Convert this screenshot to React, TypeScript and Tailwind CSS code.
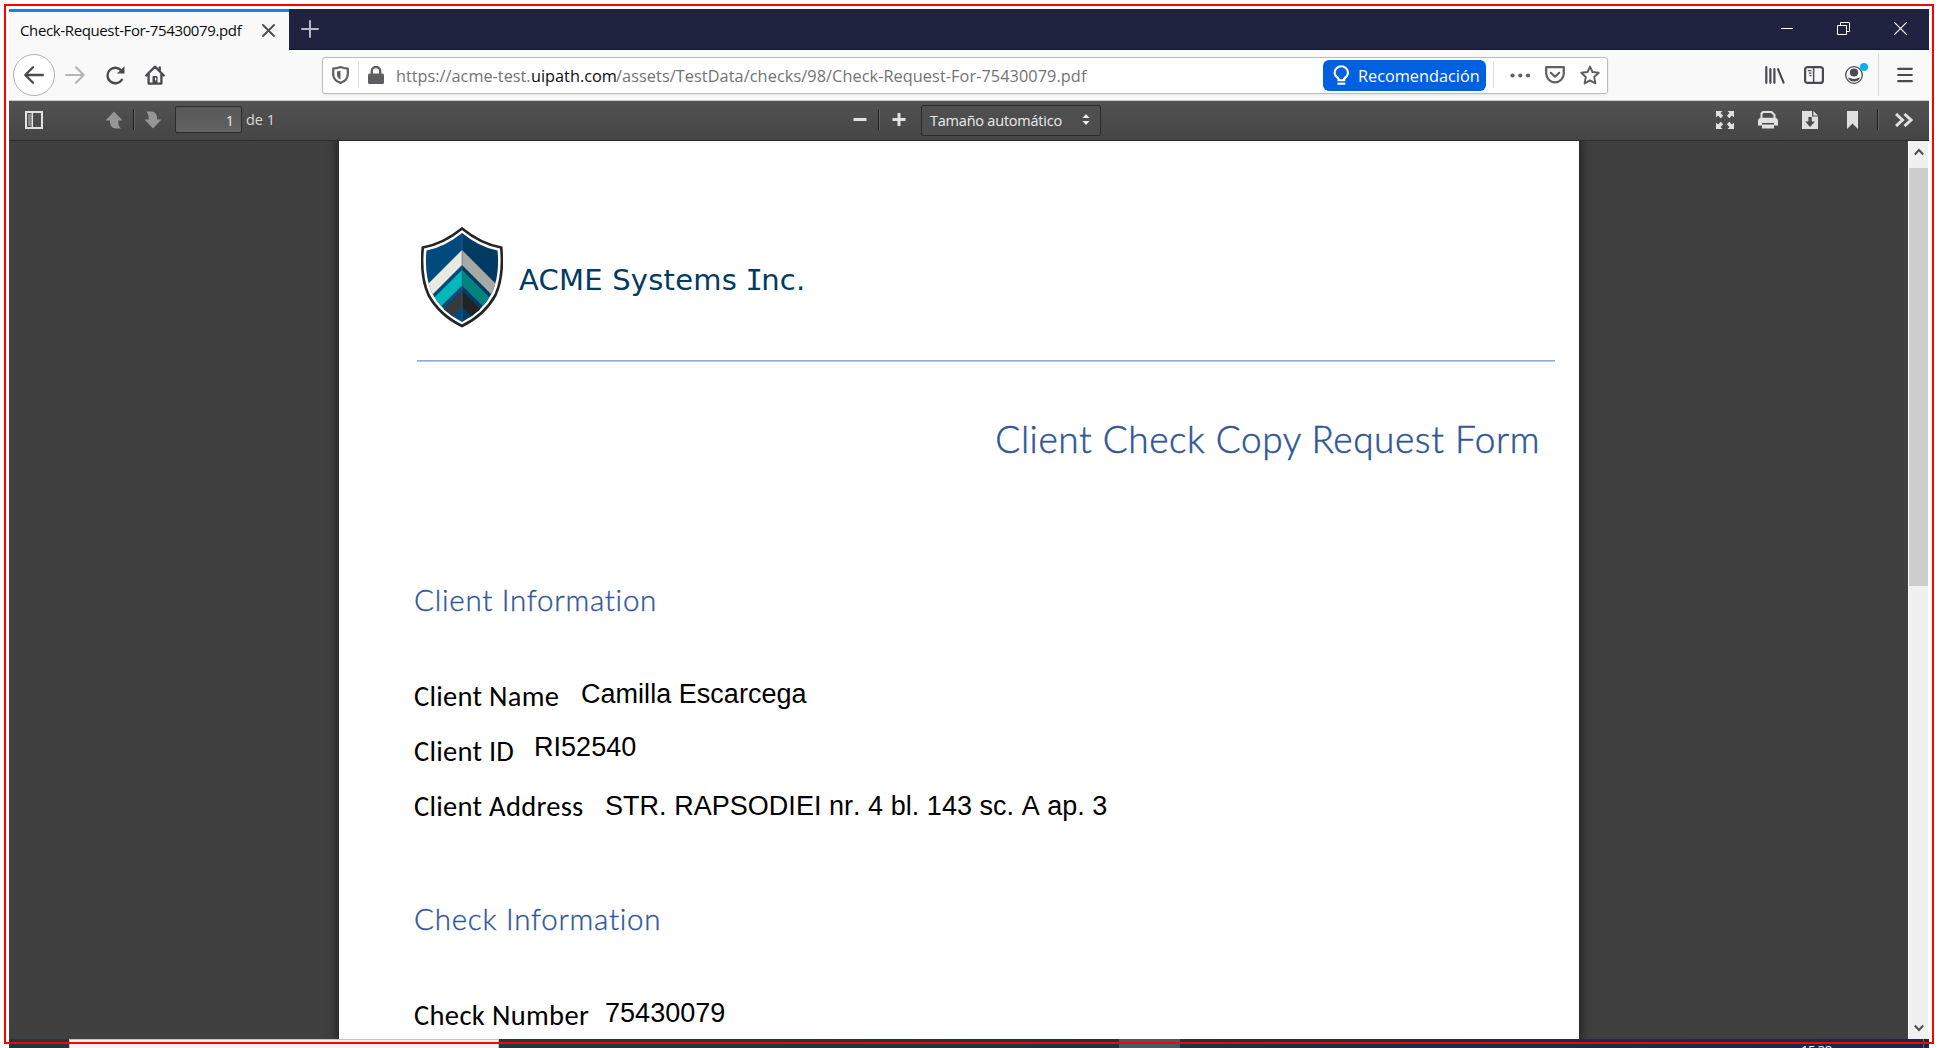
import type { ReactNode } from "react";

const UI = "font-['Open_Sans','Noto_Sans',sans-serif]";

function Shield() {
  return (
    <svg width="82" height="101" viewBox="0 0 82 101" className="shrink-0">
      <defs>
        <clipPath id="shield-inner">
          <path d="M41 6Q58 20 76.500 23.500Q79 48 71 66Q61 85 41 95Q21 85 11 66Q3 48 5.500 23.500Q24 20 41 6Z" />
        </clipPath>
      </defs>
      <path d="M41 1.500Q60 17 80.200 20.500Q83 49 74.500 68Q63.500 88 41 99Q18.500 88 7.500 68Q-1 49 1.800 20.500Q22 17 41 1.500Z" fill="#fff" stroke="#222426" strokeWidth="2.600" />
      <g clipPath="url(#shield-inner)">
        <path d="M0 0H41V101H0Z" fill="#034a7c" />
        <path d="M41 0H82V101H41Z" fill="#013a63" />
        <path d="M41 23L0 64V79L41 38Z" fill="#e9eadf" />
        <path d="M41 23L82 64V79L41 38Z" fill="#a7a9a4" />
        <path d="M41 43L0 84V99L41 58.500Z" fill="#02b8b9" />
        <path d="M41 43L82 84V99L41 58.500Z" fill="#018380" />
        <path d="M41 64L4 101H20L41 79.500Z" fill="#38393b" />
        <path d="M41 64L78 101H62L41 79.500Z" fill="#222325" />
        <path d="M41 0V101" stroke="#3d7099" strokeWidth=".6" />
      </g>
    </svg>
  );
}

function Row({ label, value, gap, col, shift, tracking }: { label: string; value: string; gap: string; col: string; shift: string; tracking: string }) {
  return (
    <div className={`flex h-10 items-start whitespace-nowrap text-black ${gap}`}>
      <span className={`-ml-[1px] mt-[1px] shrink-0 font-['Carlito','Calibri',sans-serif] text-[28.500px] font-normal leading-10 ${col} ${tracking}`}>{label}</span>
      <span className={`font-['Liberation_Sans',Arial,sans-serif] text-[27px] leading-10 tracking-[0.030px] [font-kerning:none] ${shift}`}>{value}</span>
    </div>
  );
}

function Heading({ children, gap }: { children: ReactNode; gap: string }) {
  return <h2 className={`-ml-[1px] font-['Lato',sans-serif] text-[29.500px] font-light leading-10 tracking-[0.750px] text-[#2f5597] [-webkit-text-stroke:0.350px_#2f5597] ${gap}`}>{children}</h2>;
}

function TitleBar() {
  return (
    <div className="flex h-[41px] bg-[#202340] shadow-[inset_0_-1px_0_#14162c]">
      <div className="flex w-[280px] shrink-0 items-center border-t-[3px] border-[#0a84ff] bg-[#f9f9fa] pl-[11px]">
        <span className={`${UI} mb-[2px] w-[242px] whitespace-nowrap text-[15px] leading-6 tracking-[-0.370px] text-[#0c0c0d]`}>Check-Request-For-75430079.pdf</span>
        <svg className="mb-[1px]" width="13" height="13" viewBox="0 0 13 13" fill="none" stroke="#4a4a4f" strokeWidth="1.800" strokeLinecap="round"><path d="M1 1L12 12M12 1L1 12" /></svg>
      </div>
      <svg className="ml-3 mt-[11px]" width="18" height="18" viewBox="0 0 18 18" fill="none" stroke="#b9bac5" strokeWidth="2" strokeLinecap="round"><path d="M9 1V17M1 9H17" /></svg>
      <div className="ml-auto flex items-center gap-11 pb-[2px] pr-[22px] text-white">
        <svg width="13" height="13" viewBox="0 0 13 13" stroke="currentColor"><path d="M1 6.500H13" /></svg>
        <svg width="13" height="13" viewBox="0 0 13 13" fill="none" stroke="currentColor"><path d="M.5 3.500H9.500V12.500H.5ZM3.500 3.500V.5H12.500V9.500H9.500" /></svg>
        <svg width="13" height="13" viewBox="0 0 13 13" fill="none" stroke="currentColor" strokeWidth="1.100"><path d="M0 0L13 13M13 0L0 13" /></svg>
      </div>
    </div>
  );
}

function UrlBar() {
  return (
    <div className={`${UI} ml-[157px] flex h-[37px] w-[1286px] items-center rounded-[3px] border border-[#bbbbbc] bg-white text-[#737373] shadow-[0_1px_3px_rgba(0,0,0,0.080)]`}>
      <svg className="ml-[9px]" width="17" height="18" viewBox="0 0 17 18" fill="none" stroke="#5f5f62" strokeLinejoin="round">
        <path d="M8.500 1.100C6 2.200 3.500 2.500 1.200 2.600V8C1.200 12.500 4 15.500 8.500 16.900C13 15.500 15.800 12.500 15.800 8V2.600C13.500 2.500 11 2.200 8.500 1.100Z" strokeWidth="2.200" />
        <path d="M8.500 4.800L5 5.500V8.500C5 11 6.200 12.600 8.500 13.600Z" fill="#5f5f62" stroke="none" />
      </svg>
      <div className="ml-[9px] h-[26px] w-px bg-[#dcdcdc]" />
      <svg className="mb-[1px] ml-[9px]" width="16" height="18" viewBox="0 0 16 18">
        <path d="M3.800 8V5A4.200 4 0 0 1 12.200 5V8" fill="none" stroke="#5f5f62" strokeWidth="2.300" />
        <rect y="7.500" width="16" height="10.500" rx="1.500" fill="#5f5f62" />
      </svg>
      <span className="ml-3 mt-[2px] flex whitespace-nowrap text-[16.300px] leading-6">
        <span className="w-[135px]">https://acme-test.</span>
        <span className="w-[85px] text-[#0c0c0d]">uipath.com</span>
        <span className="tracking-[0.070px]">/assets/TestData/checks/98/Check-Request-For-75430079.pdf</span>
      </span>
      <div className="ml-auto mr-[7px] flex h-[31px] w-[163px] items-center rounded-[6px] bg-[#0060df] pl-[10px] text-white">
        <svg width="17" height="20" viewBox="0 0 17 20" fill="none" stroke="currentColor" strokeWidth="2.100">
          <path d="M5.500 15.300V13.700C3.200 12 1.600 10 1.600 7.800A6.700 6.600 0 0 1 15 7.800C15 10 13.500 12 11.200 13.700V15.300Z" />
          <path d="M4.500 18.700H12.300" />
        </svg>
        <span className="ml-2 mt-[2px] text-[16.300px] leading-6">Recomendación</span>
      </div>
      <div className="h-[26px] w-px bg-[#dcdcdc]" />
      <svg className="ml-4" width="21" height="5" viewBox="0 0 21 5" fill="#5f5f62"><circle cx="2.500" cy="2.500" r="2.100" /><circle cx="10.300" cy="2.500" r="2.100" /><circle cx="18" cy="2.500" r="2.100" /></svg>
      <svg className="ml-[14px]" width="20" height="18" viewBox="0 0 20 18" fill="none" stroke="#5f5f62" strokeWidth="2.200" strokeLinecap="round" strokeLinejoin="round">
        <path d="M1.200 1.200H18.800V7.500A8.800 8.900 0 0 1 1.200 7.500Z" /><path d="M5.800 6.800L10 10.700L14.200 6.800" />
      </svg>
      <svg className="ml-[15px] mr-[7px]" width="20" height="20" viewBox="0 0 20 20" fill="none" stroke="#5f5f62" strokeWidth="1.900" strokeLinejoin="round">
        <path d="M10 1.600L12.500 7L18.700 7.700L14.200 12L15.400 18.400L10 15.400L4.600 18.400L5.800 12L1.300 7.700L7.500 7Z" />
      </svg>
    </div>
  );
}

function NavBar() {
  return (
    <div className="flex h-[51px] items-center border-b border-[#cbcbcc] bg-[#f9f9fa] text-[#4a4a4f]">
      <div className="ml-1 flex size-[42px] items-center justify-center rounded-full border border-[#b1b1b3] bg-white">
        <svg width="20" height="18" viewBox="0 0 20 18" fill="none" stroke="currentColor" strokeWidth="2.300" strokeLinecap="round" strokeLinejoin="round"><path d="M18.800 9H1.500M9 1.300L1.300 9L9 16.700" /></svg>
      </div>
      <svg className="ml-[10px]" width="20" height="18" viewBox="0 0 20 18" fill="none" stroke="#b5b5b8" strokeWidth="2.200" strokeLinecap="round" strokeLinejoin="round"><path d="M1.200 9H18.500M11 1.300L18.700 9L11 16.700" /></svg>
      <svg className="ml-[20px] mr-[1px]" width="20" height="20" viewBox="0 0 20 20" fill="none" stroke="currentColor" strokeWidth="2.400" strokeLinecap="round"><path d="M16.800 14.800A7.800 7.800 0 1 1 16.300 5.500" /><path d="M19.500 1.200V8.400H12Z" fill="currentColor" stroke="none" /></svg>
      <svg className="ml-[19px]" width="20" height="20" viewBox="0 0 20 20" fill="none" stroke="currentColor" strokeWidth="2.300" strokeLinecap="round" strokeLinejoin="round">
        <path d="M1.200 10.500L10 1.600L18.800 10.500M3.600 9V18.600H16.400V9" /><path d="M14.800 2.300V5" /><path d="M7.500 18V12A1 1 0 0 1 8.500 11H11.500A1 1 0 0 1 12.500 12V18Z" fill="currentColor" stroke="none" /><path d="M10.600 13V15" stroke="#f9f9fa" strokeWidth="1.200" />
      </svg>
      <UrlBar />
      <svg className="ml-[157px]" width="20" height="18" viewBox="0 0 20 18" fill="none" stroke="currentColor" strokeWidth="2.200" strokeLinecap="round"><path d="M1.300 1.200V16.800M5.400 3.200V16.800M9.400 3.200V16.800M13 3.200L18.600 16.600" /></svg>
      <svg className="ml-[19px]" width="20" height="18" viewBox="0 0 20 18" fill="none" stroke="currentColor" strokeWidth="2.200">
        <rect x="1.100" y="1.100" width="17.800" height="15.800" rx="2.500" /><path d="M9.600 1V17" strokeWidth="1.500" /><path d="M3.800 4.700H7.500M4.800 7.200H7.500M5.500 9.700H7.500" strokeWidth="1.300" />
      </svg>
      <svg className="mb-[4px] ml-[21px]" width="25" height="23" viewBox="0 0 25 23">
        <circle cx="9" cy="13" r="8.300" fill="#f9f9fa" stroke="currentColor" strokeWidth="1.300" /><circle cx="9" cy="10.500" r="4.100" fill="currentColor" /><path d="M3 15.500C6 16 6.500 17 9 17S12 16 15 15.500C14 18.500 11.500 19.500 9 19.500S4 18.500 3 15.500Z" fill="currentColor" /><circle cx="19" cy="5" r="4" fill="#00b3f4" />
      </svg>
      <div className="ml-[8px] h-[42px] w-px bg-[#d7d7db]" />
      <svg className="ml-[18px]" width="16" height="16" viewBox="0 0 16 16" stroke="currentColor" strokeWidth="2.200" strokeLinecap="round"><path d="M1.200 1.800H14.800M1.200 8H14.800M1.200 14.200H14.800" /></svg>
    </div>
  );
}

function Split() {
  return <div className="h-[21px] w-[2px] border-l border-[#1f1f1f] bg-[#656565]" />;
}

function PdfToolbar() {
  return (
    <div className={`${UI} flex h-10 items-center border-b border-[#2a2a2a] bg-linear-to-b from-[#525252] to-[#454545] pb-[2px] text-[#d9d9d9]`}>
      <svg className="ml-4" width="18" height="18" viewBox="0 0 18 18"><rect x="1" y="1" width="16" height="16" fill="none" stroke="#e2e2e2" strokeWidth="2" /><rect x="3" y="3" width="3.500" height="12" fill="#858585" /><path d="M7.300 2V16" stroke="#e2e2e2" strokeWidth="1.500" /></svg>
      <svg className="ml-[62px]" width="18" height="18" viewBox="0 0 18 18" fill="#969696"><path d="M9 .5L17.500 9.500H13.200C13.200 13 13.700 15.500 16 17.500H10.500C6.500 17 4.800 14 4.800 9.500H.5Z" /></svg>
      <div className="ml-[10px]"><Split /></div>
      <svg className="ml-[9px] mr-[1px]" width="18" height="18" viewBox="0 0 18 18" fill="#969696"><path d="M9 17.500L.5 8.500H4.800C4.800 5 4.300 2.500 2 .5H7.500C11.500 1 13.200 4 13.200 8.500H17.500Z" /></svg>
      <div className="ml-[12px] h-[27px] w-[67px] rounded-[2px] border border-[#2b2b2b] bg-linear-to-b from-[#585858] to-[#626262] pr-[7px] text-right text-[14.500px] leading-[27px] text-[#ececec]">1</div>
      <span className="ml-1 w-[607px] whitespace-nowrap pt-[1px] text-[14.500px] leading-5">de 1</span>
      <svg width="14" height="14" viewBox="0 0 14 14" stroke="#e2e2e2" strokeWidth="3"><path d="M.5 6.500H13.500" /></svg>
      <div className="ml-[11px]"><Split /></div>
      <svg className="ml-[12px]" width="14" height="14" viewBox="0 0 14 14" stroke="#e2e2e2" strokeWidth="3"><path d="M.5 6.500H13.500M7 0V13" /></svg>
      <div className="ml-[15px] mt-[2px] flex h-[31px] w-[180px] items-center rounded-[2px] border border-[#2b2b2b] bg-[#4e4e4e] pl-[8px] text-[#ececec]">
        <span className="w-[152px] whitespace-nowrap pt-[1px] text-[14.500px] leading-5 tracking-[-0.220px]">Tamaño automático</span>
        <svg className="mb-[2px]" width="8" height="11" viewBox="0 0 8 11" fill="#ececec"><path d="M4 0L7.500 4H.5ZM4 11L.5 7H7.500Z" /></svg>
      </div>
      <svg className="ml-auto" width="18" height="18" viewBox="0 0 18 18" fill="#e0e0e0"><path d="M0 0H6.500L4.500 2L7.200 4.700L4.700 7.200L2 4.500L0 6.500ZM18 0V6.500L16 4.500L13.300 7.200L10.800 4.700L13.500 2L11.500 0ZM0 18V11.500L2 13.500L4.700 10.800L7.200 13.300L4.500 16L6.500 18ZM18 18H11.500L13.500 16L10.800 13.300L13.300 10.800L16 13.500L18 11.500Z" /></svg>
      <svg className="ml-6" width="20" height="18" viewBox="0 0 20 18"><path d="M3.500 7V2.500L5 1H13.500L16.500 4V7" fill="none" stroke="#e0e0e0" strokeWidth="2" /><path d="M2 6.800H18L20 9V14.500H0V9Z" fill="#e0e0e0" /><path d="M4 12H16V18H4Z" fill="#4b4b4b" /><path d="M4 13.500H16V17.500H4Z" fill="#e0e0e0" /></svg>
      <svg className="ml-6" width="16" height="18" viewBox="0 0 16 18"><path d="M0 0H10V5.500H16V18H0Z" fill="#e0e0e0" /><path d="M11.300 0L16 4.400H11.300Z" fill="#e0e0e0" /><path d="M6.400 6H9.800V10.500H13L8.100 16L3.200 10.500H6.400Z" fill="#4b4b4b" /></svg>
      <svg className="ml-[29px]" width="11" height="18" viewBox="0 0 11 18"><path d="M0 0H11V18L5.500 12.500L0 18Z" fill="#e0e0e0" /></svg>
      <div className="ml-[19px]"><Split /></div>
      <svg className="ml-4 mr-4" width="18" height="14" viewBox="0 0 18 14" fill="none" stroke="#e0e0e0" strokeWidth="3"><path d="M1 1L7.500 7L1 13M9.500 1L16 7L9.500 13" /></svg>
    </div>
  );
}

function Page() {
  return (
    <div className="ml-[330px] h-[898px] w-[1240px] shrink-0 overflow-hidden bg-white pl-[76px] shadow-[0_0_9px_3px_rgba(0,0,0,0.450)]">
      <div className="ml-[6px] mt-[86px] flex h-[100px] items-center">
        <Shield />
        <span className="ml-4 mt-[6px] whitespace-nowrap font-['DejaVu_Sans',Verdana,sans-serif] text-[29px] leading-10 tracking-[0.220px] text-[#013a63]">
          ACME Systems <span className="-ml-[1px] -mr-[2px] font-['DejaVu_Sans_Mono',monospace]">I</span>nc.
        </span>
      </div>
      <div className="ml-[2px] mt-[33px] h-[2px] w-[1138px] border-b border-[#b9cbea] bg-[#8faadc]" />
      <h1 className="mt-[53px] pr-[39px] text-right font-['Lato',sans-serif] text-[37px] font-light leading-[48px] tracking-[0.550px] text-[#2f5597] [-webkit-text-stroke:0.500px_#2f5597]">Client Check Copy Request Form</h1>
      <Heading gap="mt-[117px]">Client Information</Heading>
      <Row label="Client Name" value="Camilla Escarcega" gap="mt-[56px]" col="w-[167px]" shift="-mt-[2px]" tracking="tracking-[0.280px]" />
      <Row label="Client ID" value="RI52540" gap="mt-[15px]" col="w-[120px]" shift="-mt-[4px]" tracking="tracking-[0.250px]" />
      <Row label="Client Address" value="STR. RAPSODIEI nr. 4 bl. 143 sc. A ap. 3" gap="mt-[15px]" col="w-[191px]" shift="mt-0" tracking="tracking-[0.280px]" />
      <Heading gap="mt-[73px]">Check Information</Heading>
      <Row label="Check Number" value="75430079" gap="mt-[56px]" col="w-[191px]" shift="-mt-[2px]" tracking="tracking-[0.350px]" />
    </div>
  );
}

function Scrollbar() {
  return (
    <div className="ml-auto flex w-[21px] flex-col items-center border-x border-white bg-[#f0f0f0]">
      <svg className="mt-[7px]" width="10" height="8" viewBox="0 0 10 8" fill="none" stroke="#505050" strokeWidth="2"><path d="M.8 6.500L5 2L9.200 6.500" /></svg>
      <div className="mt-3 h-[418px] w-full bg-[#cdcdcd]" />
      <svg className="mb-[7px] mt-auto" width="10" height="8" viewBox="0 0 10 8" fill="none" stroke="#505050" strokeWidth="2"><path d="M.8 1.500L5 6L9.200 1.500" /></svg>
    </div>
  );
}

export default function App() {
  return (
    <div className="relative h-[1048px] w-[1938px] overflow-hidden bg-white px-[9px] pt-[9px]">
      <TitleBar />
      <NavBar />
      <PdfToolbar />
      <div className="flex h-[898px] overflow-hidden bg-[#404040]">
        <Page />
        <Scrollbar />
      </div>
      <div className="flex h-[9px] overflow-hidden bg-linear-to-r from-[#22363f] from-40% to-[#1b2748]">
        <div className="ml-[60px] w-[430px] border border-b-0 border-[#c4c4c4] bg-[#f2f2f2]" />
        <div className="ml-[620px] w-[61px] bg-[#4a5868]" />
        <span className={`${UI} ml-[621px] mt-[5px] whitespace-nowrap text-[13px] leading-[13px] tracking-[-0.500px] text-white`}>15:38</span>
        <div className="ml-auto mr-[5px] w-px bg-[#5d6679]" />
      </div>
      <div className="pointer-events-none absolute left-1 top-1 h-[1040px] w-[1930px] border-2 border-[#ff0000]" />
    </div>
  );
}
